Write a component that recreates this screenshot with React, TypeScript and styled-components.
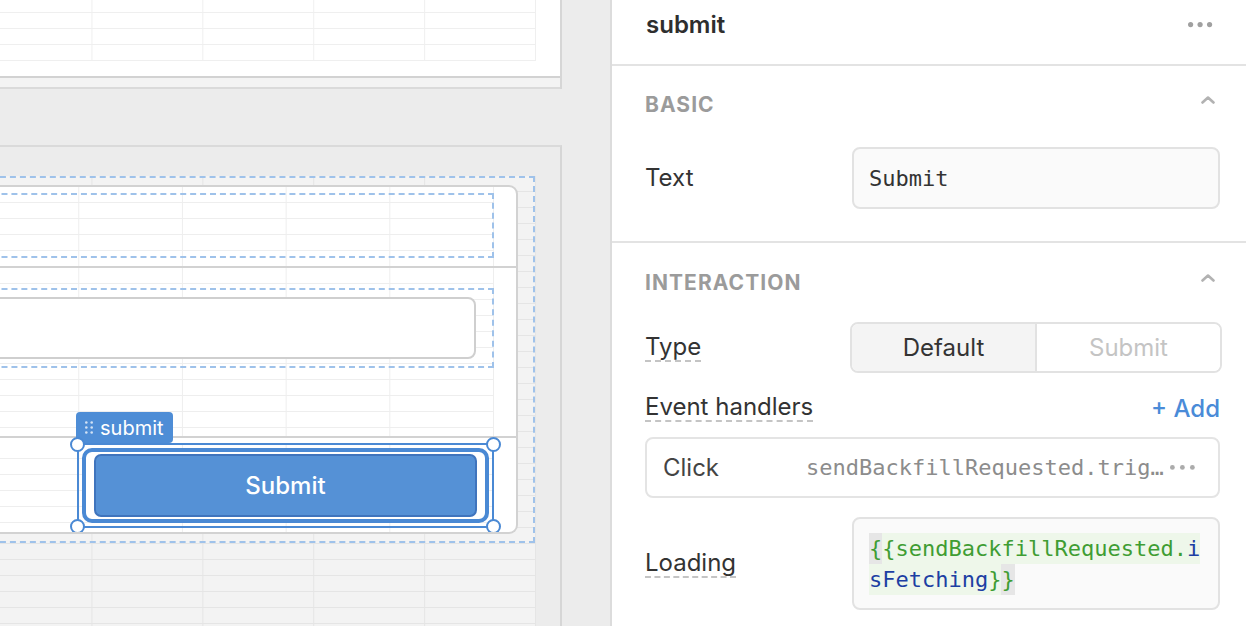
import React from "react";
import styled, { createGlobalStyle, css } from "styled-components";

const GlobalStyle = createGlobalStyle`
  *, *::before, *::after { box-sizing: border-box; }
  html, body { margin: 0; padding: 0; }
  body {
    font-family: Inter, "Noto Sans", sans-serif;
    background: #ececec;
    overflow: hidden;
  }
`;

const MONO = `"DejaVu Sans Mono", "Liberation Mono", monospace`;

const gridLines = (color: string, w: number, h: number, vAnchor = "top") => css`
  background-image: linear-gradient(to left, ${color} 1px, transparent 1px),
    linear-gradient(to top, ${color} 1px, transparent 1px);
  background-size: ${w}px 100%, 100% ${h}px;
  background-position: right top, left ${vAnchor};
  background-origin: content-box;
  background-clip: content-box;
`;

const Page = styled.div`
  display: flex;
  width: 1246px;
  height: 626px;
  overflow: hidden;
`;

/* ---------- Canvas ---------- */

const Canvas = styled.div`
  flex: none;
  width: 612px;
  height: 100%;
  background: #ececec;
  border-right: 2px solid #dcdcdc;
  padding-right: 48px;
  overflow: hidden;
  display: flex;
  flex-direction: column;
`;

const TopCard = styled.div`
  margin-left: -10px;
  background: #fff;
  border-right: 2px solid #d6d6d6;
`;

const TopCardBody = styled.div`
  height: 76px;
  padding: 0 24px 15px 0;
`;

const CanvasGrid = styled.div<{ $color: string; $w: number; $anchor?: string }>`
  height: 100%;
  ${(p) => gridLines(p.$color, p.$w, 16, p.$anchor)}
`;

const TopCardFooter = styled.div`
  height: 13px;
  background: #f3f3f3;
  border-top: 2px solid #d2d2d2;
  border-bottom: 2px solid #dadada;
`;

const BottomCard = styled.div`
  flex: 1;
  margin-top: 56px;
  margin-left: -10px;
  background: #f3f3f3;
  border-top: 2px solid #dadada;
  border-right: 2px solid #d6d6d6;
  padding: 29px 24px 0 0;
  ${gridLines("#e5e5e5", 110.9, 16)}
`;

const DashedBox = styled.div<{ $h?: number; $pad?: string }>`
  margin-left: -20px;
  border: 2px dashed #9fc2ea;
  ${(p) => (p.$h ? `height: ${p.$h}px;` : "")}
  ${(p) => (p.$pad ? `padding: ${p.$pad};` : "")}
`;

const OuterSelection = styled(DashedBox)`
  margin-right: 1px;
`;

const Form = styled.div`
  margin-left: -20px;
  background: #fff;
  border: 2px solid #d2d2d2;
  border-left: none;
  border-radius: 0 9px 9px 0;
  overflow: hidden;
`;

const FormSection = styled.div<{ $h: number; $divider?: boolean }>`
  height: ${(p) => p.$h}px;
  padding-right: 22px;
  ${(p) => (p.$divider ? "border-top: 2px solid #d2d2d2;" : "")}
  ${gridLines("#eeeeee", 103.7, 16)}
  display: flex;
  flex-direction: column;
`;

const TitleSlot = styled(DashedBox)`
  margin-top: 6px;
`;

const InputSlot = styled(DashedBox)`
  margin-top: 20px;
`;

const FakeInput = styled.div`
  margin-left: -20px;
  height: 62px;
  background: #fff;
  border: 2px solid #cfcfcf;
  border-radius: 8px;
`;

const FooterSection = styled(FormSection)`
  flex-direction: row;
  justify-content: flex-end;
  padding-top: 5px;
`;

const SelectFrame = styled.div`
  position: relative;
  width: 417px;
  height: 85px;
  border: 2px solid #4a89d4;
  padding: 3px;
`;

const SelectRing = styled.div`
  height: 100%;
  border: 4px solid #4a89d4;
  border-radius: 10px;
  padding: 2px 8px;
  background: #fff;
`;

const PrimaryButton = styled.div`
  height: 100%;
  background: #5591d6;
  border: 2px solid #3f74bd;
  border-radius: 7px;
  color: #fff;
  font-size: 24px;
  font-weight: 500;
  display: flex;
  align-items: center;
  justify-content: center;
`;

const Handle = styled.span<{ $v: "top" | "bottom"; $h: "left" | "right" }>`
  position: absolute;
  ${(p) => p.$v}: -8px;
  ${(p) => p.$h}: -9px;
  width: 15px;
  height: 15px;
  border-radius: 50%;
  background: #fff;
  border: 2px solid #4a89d4;
`;

const NameTag = styled.div`
  position: absolute;
  left: -3px;
  bottom: calc(100% + 2px);
  height: 31px;
  padding: 0 9px;
  display: flex;
  align-items: center;
  gap: 7px;
  background: #4e8dd6;
  color: #fff;
  font-size: 20px;
  border-radius: 4px;
`;

const Grip = () => (
  <svg width="8" height="13" viewBox="0 0 8 13" fill="rgba(255,255,255,0.75)">
    <circle cx="1.3" cy="1.5" r="1.3" />
    <circle cx="6.7" cy="1.5" r="1.3" />
    <circle cx="1.3" cy="6.5" r="1.3" />
    <circle cx="6.7" cy="6.5" r="1.3" />
    <circle cx="1.3" cy="11.5" r="1.3" />
    <circle cx="6.7" cy="11.5" r="1.3" />
  </svg>
);

/* ---------- Inspector panel ---------- */

const Panel = styled.div`
  flex: 1;
  min-width: 0;
  background: #fff;
  display: flex;
  flex-direction: column;
  color: #333;
  font-size: 24px;
`;

const PanelHeader = styled.div`
  height: 66px;
  flex: none;
  border-bottom: 2px solid #e3e3e3;
  padding: 11px 34px 0 34px;
  display: flex;
  justify-content: space-between;
  align-items: flex-start;
`;

const PanelTitle = styled.div`
  font-size: 24px;
  font-weight: 600;
  line-height: 28px;
  color: #2e2e2e;
`;

const Dots = ({ color, gap = 10, r = 2.6 }: { color: string; gap?: number; r?: number }) => (
  <svg width={gap * 2 + r * 2 + 2} height={r * 2 + 2} viewBox={`0 0 ${gap * 2 + r * 2 + 2} ${r * 2 + 2}`} fill={color}>
    <circle cx={r + 1} cy={r + 1} r={r} />
    <circle cx={r + 1 + gap} cy={r + 1} r={r} />
    <circle cx={r + 1 + gap * 2} cy={r + 1} r={r} />
  </svg>
);

const HeaderDots = styled.div`
  height: 28px;
  display: flex;
  align-items: center;
  margin-right: -1px;
`;

const Section = styled.div<{ $top: number; $bottom: number; $last?: boolean }>`
  padding: ${(p) => p.$top}px 26px ${(p) => p.$bottom}px 33px;
  ${(p) => (p.$last ? "" : "border-bottom: 2px solid #e3e3e3;")}
  display: flex;
  flex-direction: column;
`;

const SectionHead = styled.div`
  height: 28px;
  display: flex;
  align-items: center;
  justify-content: space-between;
`;

const SectionTitle = styled.div`
  font-size: 21px;
  font-weight: 700;
  letter-spacing: 0.05em;
  color: #9b9b9b;
  text-transform: uppercase;
`;

const Chevron = styled.svg`
  margin-right: 5px;
  margin-top: -8px;
`;

const ChevronUp = () => (
  <Chevron width="14" height="8" viewBox="0 0 14 8" fill="none">
    <polyline points="1.5,6.5 7,1.5 12.5,6.5" stroke="#b2b2b2" strokeWidth="2.6" strokeLinecap="round" strokeLinejoin="round" />
  </Chevron>
);

const FieldRow = styled.div<{ $mt: number }>`
  margin-top: ${(p) => p.$mt}px;
  display: grid;
  grid-template-columns: 207px minmax(0, 1fr);
  align-items: center;
`;

const Label = styled.div`
  line-height: 28px;
  color: #333;
`;

const HintLabel = styled.span`
  justify-self: start;
  color: #333;
  line-height: 26px;
  border-bottom: 2px dashed #c4c4c4;
`;

const TextInput = styled.div`
  height: 62px;
  background: #fafafa;
  border: 2px solid #e2e2e2;
  border-radius: 8px;
  padding-left: 15px;
  display: flex;
  align-items: center;
  font-family: ${MONO};
  font-size: 22px;
  color: #333;
`;

const Segmented = styled.div`
  margin: 0 -2px;
  height: 51px;
  border: 2px solid #e2e2e2;
  border-radius: 8px;
  overflow: hidden;
  display: flex;
`;

const Segment = styled.div<{ $active?: boolean }>`
  flex: 1;
  display: flex;
  align-items: center;
  justify-content: center;
  background: ${(p) => (p.$active ? "#f4f4f4" : "#fff")};
  color: ${(p) => (p.$active ? "#333" : "#c4c4c4")};
  & + & {
    border-left: 2px solid #e2e2e2;
  }
`;

const HandlersHead = styled.div`
  margin-top: 21px;
  height: 28px;
  display: flex;
  align-items: center;
  justify-content: space-between;
`;

const AddLink = styled.span`
  color: #4a8bd8;
  font-weight: 500;
`;

const HandlerBox = styled.div`
  margin-top: 15px;
  height: 61px;
  border: 2px solid #e4e4e4;
  border-radius: 8px;
  padding: 0 22px 0 16px;
  display: flex;
  align-items: center;
  min-width: 0;
`;

const HandlerEvent = styled.span`
  width: 143px;
  flex: none;
  color: #444;
`;

const HandlerAction = styled.span`
  flex: 0 1 27.4ch;
  min-width: 0;
  font-family: ${MONO};
  font-size: 22px;
  color: #8c8c8c;
  white-space: nowrap;
  overflow: hidden;
  text-overflow: ellipsis;
`;

const HandlerMore = styled.span`
  margin-left: auto;
  display: flex;
  flex: none;
`;

const CodeBox = styled.div`
  height: 93px;
  background: #fafafa;
  border: 2px solid #e2e2e2;
  border-radius: 8px;
  padding: 14px 15px;
`;

const Code = styled.div`
  width: 25ch;
  font-family: ${MONO};
  font-size: 22px;
  line-height: 31px;
  word-break: break-all;
`;

const Tok = styled.span<{ $c: "green" | "blue"; $bg: "green" | "gray" }>`
  color: ${(p) => (p.$c === "green" ? "#3f9d33" : "#1d3fa3")};
  background: ${(p) => (p.$bg === "green" ? "#eef7ea" : "#e6e6e6")};
  padding: 3px 0;
`;

export default function App() {
  return (
    <Page>
      <GlobalStyle />
      <Canvas>
        <TopCard>
          <TopCardBody>
            <CanvasGrid $color="#efefef" $w={110.9} $anchor="bottom" />
          </TopCardBody>
          <TopCardFooter />
        </TopCard>
        <BottomCard>
          <OuterSelection $pad="7px 15px 7px 0">
            <Form>
              <FormSection $h={79}>
                <TitleSlot $h={65} />
              </FormSection>
              <FormSection $h={170} $divider>
                <InputSlot $h={80} $pad="7px 16px 7px 0">
                  <FakeInput />
                </InputSlot>
              </FormSection>
              <FooterSection $h={96} $divider>
                <SelectFrame>
                  <NameTag>
                    <Grip />
                    submit
                  </NameTag>
                  <SelectRing>
                    <PrimaryButton>Submit</PrimaryButton>
                  </SelectRing>
                  <Handle $v="top" $h="left" />
                  <Handle $v="top" $h="right" />
                  <Handle $v="bottom" $h="left" />
                  <Handle $v="bottom" $h="right" />
                </SelectFrame>
              </FooterSection>
            </Form>
          </OuterSelection>
        </BottomCard>
      </Canvas>

      <Panel>
        <PanelHeader>
          <PanelTitle>submit</PanelTitle>
          <HeaderDots>
            <Dots color="#a0a0a0" gap={9.5} r={2.6} />
          </HeaderDots>
        </PanelHeader>

        <Section $top={24} $bottom={32}>
          <SectionHead>
            <SectionTitle>Basic</SectionTitle>
            <ChevronUp />
          </SectionHead>
          <FieldRow $mt={29}>
            <Label>Text</Label>
            <TextInput>Submit</TextInput>
          </FieldRow>
        </Section>

        <Section $top={25} $bottom={0} $last>
          <SectionHead>
            <SectionTitle>Interaction</SectionTitle>
            <ChevronUp />
          </SectionHead>
          <FieldRow $mt={26}>
            <HintLabel>Type</HintLabel>
            <Segmented>
              <Segment $active>Default</Segment>
              <Segment>Submit</Segment>
            </Segmented>
          </FieldRow>
          <HandlersHead>
            <HintLabel>Event handlers</HintLabel>
            <AddLink>+ Add</AddLink>
          </HandlersHead>
          <HandlerBox>
            <HandlerEvent>Click</HandlerEvent>
            <HandlerAction>sendBackfillRequested.trigger()</HandlerAction>
            <HandlerMore>
              <Dots color="#ababab" gap={10} r={2.4} />
            </HandlerMore>
          </HandlerBox>
          <FieldRow $mt={19}>
            <HintLabel>Loading</HintLabel>
            <CodeBox>
              <Code>
                <Tok $c="green" $bg="gray">{"{"}</Tok>
                <Tok $c="green" $bg="green">{"{sendBackfillRequested."}</Tok>
                <Tok $c="blue" $bg="green">isFetching</Tok>
                <Tok $c="green" $bg="green">{"}"}</Tok>
                <Tok $c="green" $bg="gray">{"}"}</Tok>
              </Code>
            </CodeBox>
          </FieldRow>
        </Section>
      </Panel>
    </Page>
  );
}
